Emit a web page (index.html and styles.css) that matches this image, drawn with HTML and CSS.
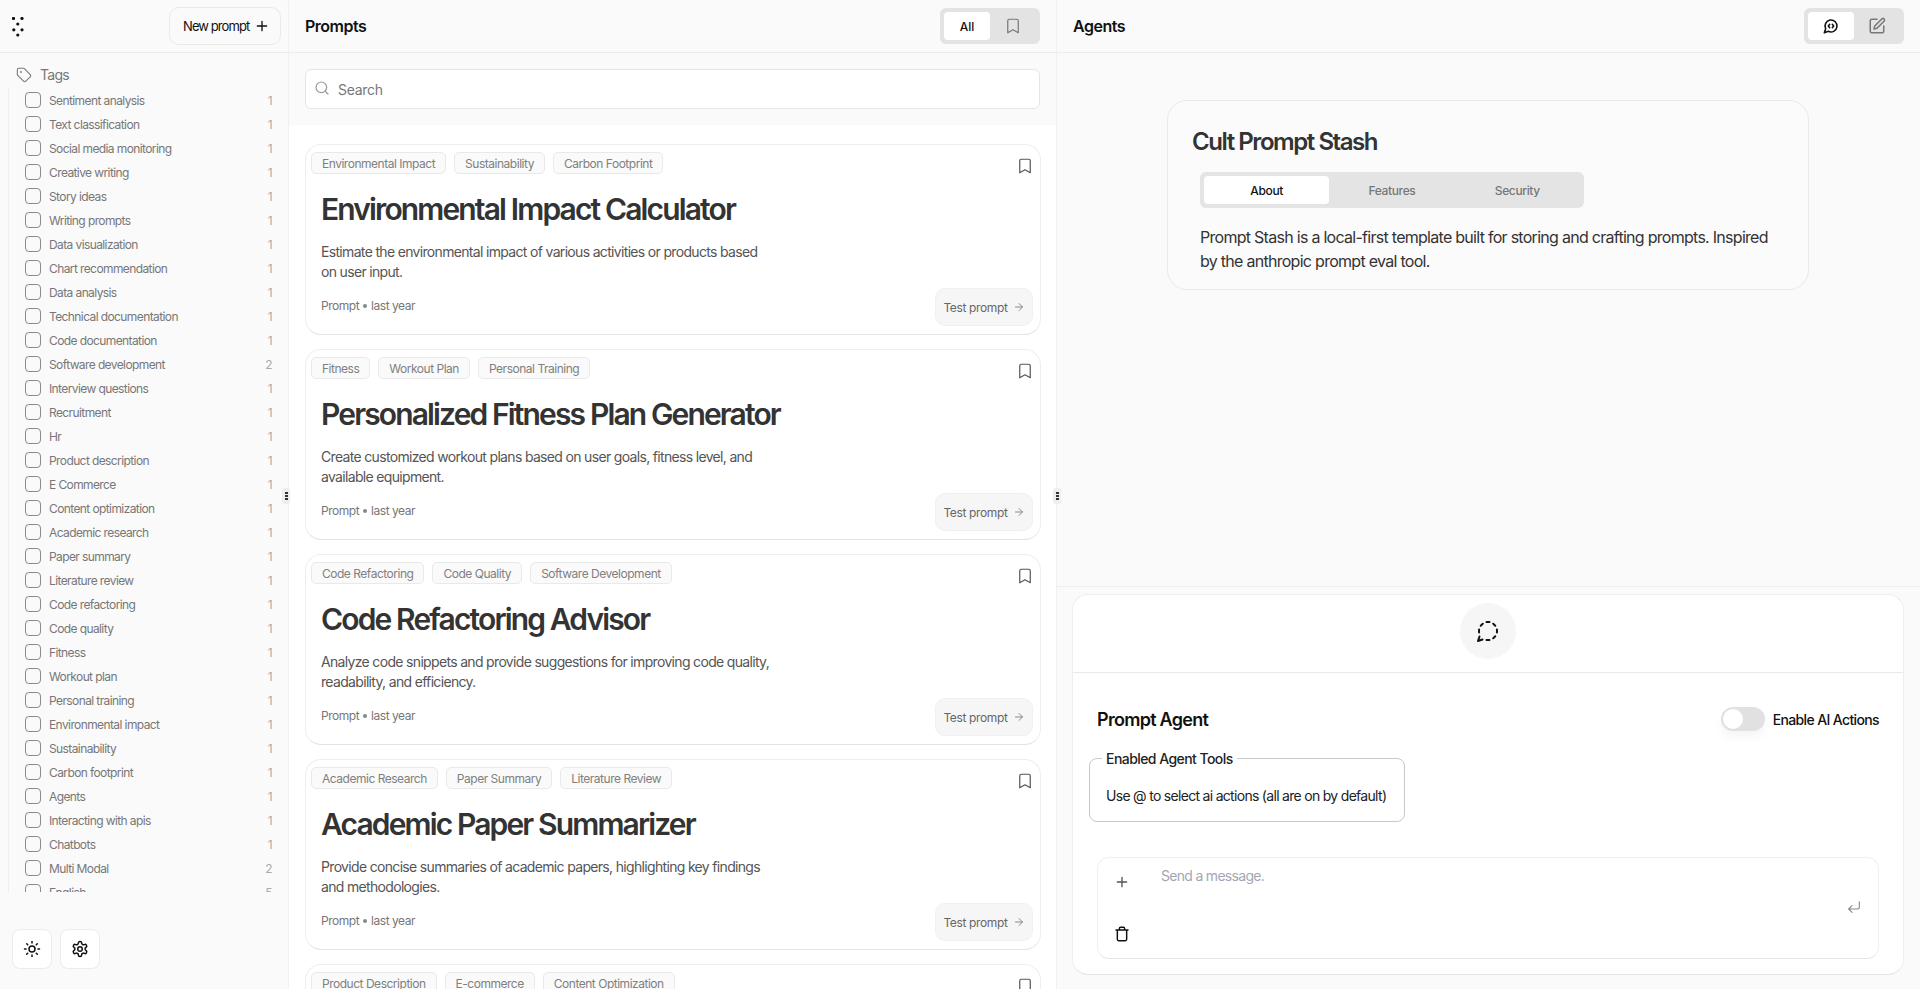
FILE: index.html
```html
<!DOCTYPE html>
<html lang="en">
<head>
<meta charset="utf-8">
<title>Cult Prompt Stash</title>
<link rel="stylesheet" href="styles.css">
</head>
<body>
<div class="app">
  <aside class="sidebar">
    <header class="side-head">
      <svg class="logo" viewBox="0 0 12 20" width="12" height="20" fill="#111"><circle cx="1.5" cy="1.5" r="1.6"/><circle cx="10" cy="1.5" r="1.6"/><circle cx="5.8" cy="7" r="1.6"/><circle cx="1.8" cy="12.8" r="1.6"/><circle cx="10" cy="12.8" r="1.6"/><circle cx="5.8" cy="18" r="1.6"/></svg>
      <button class="new-btn">New prompt <svg viewBox="0 0 24 24" width="16" height="16" fill="none" stroke="#111" stroke-width="2" stroke-linecap="round"><path d="M5 12h14M12 5v14"/></svg></button>
    </header>
    <div class="tags-title"><svg viewBox="0 0 24 24" width="16" height="16" fill="none" stroke="#777" stroke-width="1.6" stroke-linejoin="round" stroke-linecap="round"><path d="M12.6 2.6A2 2 0 0 0 11.2 2H4a2 2 0 0 0-2 2v7.2a2 2 0 0 0 .6 1.4l8.7 8.7a2.4 2.4 0 0 0 3.4 0l6.6-6.6a2.4 2.4 0 0 0 0-3.4z"/><circle cx="7.5" cy="7.5" r=".6"/></svg>Tags</div>
    <ul class="tag-list">
      <li><i></i><span>Sentiment analysis</span><b>1</b></li>
      <li><i></i><span>Text classification</span><b>1</b></li>
      <li><i></i><span>Social media monitoring</span><b>1</b></li>
      <li><i></i><span>Creative writing</span><b>1</b></li>
      <li><i></i><span>Story ideas</span><b>1</b></li>
      <li><i></i><span>Writing prompts</span><b>1</b></li>
      <li><i></i><span>Data visualization</span><b>1</b></li>
      <li><i></i><span>Chart recommendation</span><b>1</b></li>
      <li><i></i><span>Data analysis</span><b>1</b></li>
      <li><i></i><span>Technical documentation</span><b>1</b></li>
      <li><i></i><span>Code documentation</span><b>1</b></li>
      <li><i></i><span>Software development</span><b>2</b></li>
      <li><i></i><span>Interview questions</span><b>1</b></li>
      <li><i></i><span>Recruitment</span><b>1</b></li>
      <li><i></i><span>Hr</span><b>1</b></li>
      <li><i></i><span>Product description</span><b>1</b></li>
      <li><i></i><span>E Commerce</span><b>1</b></li>
      <li><i></i><span>Content optimization</span><b>1</b></li>
      <li><i></i><span>Academic research</span><b>1</b></li>
      <li><i></i><span>Paper summary</span><b>1</b></li>
      <li><i></i><span>Literature review</span><b>1</b></li>
      <li><i></i><span>Code refactoring</span><b>1</b></li>
      <li><i></i><span>Code quality</span><b>1</b></li>
      <li><i></i><span>Fitness</span><b>1</b></li>
      <li><i></i><span>Workout plan</span><b>1</b></li>
      <li><i></i><span>Personal training</span><b>1</b></li>
      <li><i></i><span>Environmental impact</span><b>1</b></li>
      <li><i></i><span>Sustainability</span><b>1</b></li>
      <li><i></i><span>Carbon footprint</span><b>1</b></li>
      <li><i></i><span>Agents</span><b>1</b></li>
      <li><i></i><span>Interacting with apis</span><b>1</b></li>
      <li><i></i><span>Chatbots</span><b>1</b></li>
      <li><i></i><span>Multi Modal</span><b>2</b></li>
      <li><i></i><span>English</span><b>5</b></li>
    </ul>
    <div class="side-foot">
      <button class="icon-btn"><svg viewBox="0 0 24 24" width="18" height="18" fill="none" stroke="#111" stroke-width="2" stroke-linecap="round"><circle cx="12" cy="12" r="4"/><path d="M12 2v2M12 20v2M4.9 4.9l1.4 1.4M17.7 17.7l1.4 1.4M2 12h2M20 12h2M6.3 17.7l-1.4 1.4M19.1 4.9l-1.4 1.4"/></svg></button>
      <button class="icon-btn"><svg viewBox="0 0 24 24" width="18" height="18" fill="none" stroke="#111" stroke-width="2" stroke-linecap="round" stroke-linejoin="round"><path d="M12.2 2h-.4a2 2 0 0 0-2 2v.2a2 2 0 0 1-1 1.7l-.4.3a2 2 0 0 1-2 0l-.2-.1a2 2 0 0 0-2.7.7l-.2.4a2 2 0 0 0 .7 2.7l.2.1a2 2 0 0 1 1 1.7v.5a2 2 0 0 1-1 1.7l-.2.1a2 2 0 0 0-.7 2.7l.2.4a2 2 0 0 0 2.7.7l.2-.1a2 2 0 0 1 2 0l.4.3a2 2 0 0 1 1 1.7v.2a2 2 0 0 0 2 2h.4a2 2 0 0 0 2-2v-.2a2 2 0 0 1 1-1.7l.4-.3a2 2 0 0 1 2 0l.2.1a2 2 0 0 0 2.7-.7l.2-.4a2 2 0 0 0-.7-2.7l-.2-.1a2 2 0 0 1-1-1.7v-.5a2 2 0 0 1 1-1.7l.2-.1a2 2 0 0 0 .7-2.7l-.2-.4a2 2 0 0 0-2.7-.7l-.2.1a2 2 0 0 1-2 0l-.4-.3a2 2 0 0 1-1-1.7V4a2 2 0 0 0-2-2z"/><circle cx="12" cy="12" r="3"/></svg></button>
    </div>
  </aside>

  <main class="prompts">
    <span class="grip"><i></i><i></i><i></i></span>
    <header class="panel-head">
      <h2>Prompts</h2>
      <div class="seg">
        <span class="seg-item on">All</span>
        <span class="seg-item"><svg viewBox="0 0 24 24" width="18" height="18" fill="none" stroke="#777" stroke-width="1.6" stroke-linejoin="round"><path d="M19 21l-7-4-7 4V5a2 2 0 0 1 2-2h10a2 2 0 0 1 2 2z"/></svg></span>
      </div>
    </header>
    <div class="search-wrap">
      <label class="search"><svg viewBox="0 0 24 24" width="16" height="16" fill="none" stroke="#999" stroke-width="1.8" stroke-linecap="round"><circle cx="11" cy="11" r="8"/><path d="M21 21l-4.3-4.3"/></svg><span>Search</span></label>
    </div>
    <div class="cards">
      <article class="card">
        <div class="chips"><span>Environmental Impact</span><span>Sustainability</span><span>Carbon Footprint</span></div>
        <svg class="mark" viewBox="0 0 24 24" width="18" height="18" fill="none" stroke="#555" stroke-width="1.6" stroke-linejoin="round"><path d="M19 21l-7-4-7 4V5a2 2 0 0 1 2-2h10a2 2 0 0 1 2 2z"/></svg>
        <h3>Environmental Impact Calculator</h3>
        <p>Estimate the environmental impact of various activities or products based on user input.</p>
        <div class="card-foot"><small>Prompt <em></em> last year</small><button class="test">Test prompt <svg viewBox="0 0 24 24" width="12" height="12" fill="none" stroke="#888" stroke-width="2" stroke-linecap="round" stroke-linejoin="round"><path d="M5 12h14M12 5l7 7-7 7"/></svg></button></div>
      </article>
      <article class="card">
        <div class="chips"><span>Fitness</span><span>Workout Plan</span><span>Personal Training</span></div>
        <svg class="mark" viewBox="0 0 24 24" width="18" height="18" fill="none" stroke="#555" stroke-width="1.6" stroke-linejoin="round"><path d="M19 21l-7-4-7 4V5a2 2 0 0 1 2-2h10a2 2 0 0 1 2 2z"/></svg>
        <h3>Personalized Fitness Plan Generator</h3>
        <p>Create customized workout plans based on user goals, fitness level, and available equipment.</p>
        <div class="card-foot"><small>Prompt <em></em> last year</small><button class="test">Test prompt <svg viewBox="0 0 24 24" width="12" height="12" fill="none" stroke="#888" stroke-width="2" stroke-linecap="round" stroke-linejoin="round"><path d="M5 12h14M12 5l7 7-7 7"/></svg></button></div>
      </article>
      <article class="card">
        <div class="chips"><span>Code Refactoring</span><span>Code Quality</span><span>Software Development</span></div>
        <svg class="mark" viewBox="0 0 24 24" width="18" height="18" fill="none" stroke="#555" stroke-width="1.6" stroke-linejoin="round"><path d="M19 21l-7-4-7 4V5a2 2 0 0 1 2-2h10a2 2 0 0 1 2 2z"/></svg>
        <h3>Code Refactoring Advisor</h3>
        <p>Analyze code snippets and provide suggestions for improving code quality, readability, and efficiency.</p>
        <div class="card-foot"><small>Prompt <em></em> last year</small><button class="test">Test prompt <svg viewBox="0 0 24 24" width="12" height="12" fill="none" stroke="#888" stroke-width="2" stroke-linecap="round" stroke-linejoin="round"><path d="M5 12h14M12 5l7 7-7 7"/></svg></button></div>
      </article>
      <article class="card">
        <div class="chips"><span>Academic Research</span><span>Paper Summary</span><span>Literature Review</span></div>
        <svg class="mark" viewBox="0 0 24 24" width="18" height="18" fill="none" stroke="#555" stroke-width="1.6" stroke-linejoin="round"><path d="M19 21l-7-4-7 4V5a2 2 0 0 1 2-2h10a2 2 0 0 1 2 2z"/></svg>
        <h3>Academic Paper Summarizer</h3>
        <p>Provide concise summaries of academic papers, highlighting key findings and methodologies.</p>
        <div class="card-foot"><small>Prompt <em></em> last year</small><button class="test">Test prompt <svg viewBox="0 0 24 24" width="12" height="12" fill="none" stroke="#888" stroke-width="2" stroke-linecap="round" stroke-linejoin="round"><path d="M5 12h14M12 5l7 7-7 7"/></svg></button></div>
      </article>
      <article class="card">
        <div class="chips"><span>Product Description</span><span>E-commerce</span><span>Content Optimization</span></div>
        <svg class="mark" viewBox="0 0 24 24" width="18" height="18" fill="none" stroke="#555" stroke-width="1.6" stroke-linejoin="round"><path d="M19 21l-7-4-7 4V5a2 2 0 0 1 2-2h10a2 2 0 0 1 2 2z"/></svg>
      </article>
    </div>
  </main>

  <section class="agents">
    <span class="grip"><i></i><i></i><i></i></span>
    <header class="panel-head">
      <h2>Agents</h2>
      <div class="seg">
        <span class="seg-item on"><svg viewBox="0 0 24 24" width="16" height="16" fill="none" stroke="#111" stroke-width="2.4" stroke-linecap="round" stroke-linejoin="round"><path d="M10 9.5 8 12l2 2.5"/><path d="m14 9.5 2 2.5-2 2.5"/><path d="M7.9 20A9 9 0 1 0 4 16.1L2 22z"/></svg></span>
        <span class="seg-item"><svg viewBox="0 0 24 24" width="18" height="18" fill="none" stroke="#777" stroke-width="2" stroke-linecap="round" stroke-linejoin="round"><path d="M12 3H5a2 2 0 0 0-2 2v14a2 2 0 0 0 2 2h14a2 2 0 0 0 2-2v-7"/><path d="M18.4 2.6a2.1 2.1 0 1 1 3 3L12 15l-4 1 1-4z"/></svg></span>
      </div>
    </header>
    <div class="about-area">
      <div class="about">
        <h1>Cult Prompt Stash</h1>
        <div class="tabs"><span class="on">About</span><span>Features</span><span>Security</span></div>
        <p>Prompt Stash is a local-first template built for storing and crafting prompts. Inspired by the anthropic prompt eval tool.</p>
      </div>
    </div>
    <div class="chat-area">
      <div class="chat">
        <div class="chat-top"><span class="bubble"><svg viewBox="0 0 24 24" width="24" height="24" fill="none" stroke="#111" stroke-width="2" stroke-linecap="round" stroke-linejoin="round"><path d="M13.5 3.1c-.5 0-1-.1-1.500-.1s-1 .1-1.500.1"/><path d="M19.300 6.800a10.450 10.450 0 0 0-2.100-2.100"/><path d="M20.900 13.500c.1-.5.1-1 .1-1.500s-.1-1-.1-1.500"/><path d="M17.200 19.300a10.450 10.450 0 0 0 2.100-2.100"/><path d="M10.500 20.900c.5.1 1 .1 1.500.1s1-.1 1.500-.1"/><path d="M3.500 17.500 2 22l4.500-1.500"/><path d="M3.100 10.500c0 .5-.1 1-.1 1.500s.1 1 .1 1.500"/><path d="M6.800 4.700a10.450 10.450 0 0 0-2.100 2.100"/></svg></span></div>
        <div class="chat-body">
          <div class="agent-row">
            <h4>Prompt Agent</h4>
            <div class="toggle-wrap"><span class="toggle"><i></i></span>Enable AI Actions</div>
          </div>
          <fieldset class="tools">
            <legend>Enabled Agent Tools</legend>
            <p>Use @ to select ai actions (all are on by default)</p>
          </fieldset>
          <div class="composer">
            <div class="composer-tools">
              <svg viewBox="0 0 24 24" width="16" height="16" fill="none" stroke="#555" stroke-width="2" stroke-linecap="round"><path d="M5 12h14M12 5v14"/></svg>
              <svg viewBox="0 0 24 24" width="16" height="16" fill="none" stroke="#111" stroke-width="2.200" stroke-linecap="round" stroke-linejoin="round"><path d="M3 6h18M19 6v14a2 2 0 0 1-2 2H7a2 2 0 0 1-2-2V6M8 6V4a2 2 0 0 1 2-2h4a2 2 0 0 1 2 2v2"/></svg>
            </div>
            <div class="placeholder">Send a message.</div>
            <svg class="enter" viewBox="0 0 24 24" width="16" height="16" fill="none" stroke="#888" stroke-width="1.6" stroke-linecap="round" stroke-linejoin="round"><path d="M20 4v8a3 3 0 0 1-3 3H4M9 10l-5 5 5 5"/></svg>
          </div>
        </div>
      </div>
    </div>
  </section>
</div>
</body>
</html>
```
FILE: styles.css
```css
* { box-sizing: border-box; }
html, body { margin: 0; height: 100%; overflow: hidden; }
body { font-family: Inter, "Noto Sans", sans-serif; color: #111; background: #fafafa; }
button { font-family: inherit; cursor: pointer; }
h1, h2, h3, h4, p, ul { margin: 0; padding: 0; }
ul { list-style: none; }

.app { display: grid; grid-template-columns: 289px 768px 1fr; height: 989px; }

/* sidebar */
.sidebar { display: flex; flex-direction: column; background: #fafafa; border-right: 1px solid #f0f0f0; height: 989px; }
.side-head { height: 53px; flex: none; display: flex; align-items: center; justify-content: space-between; padding: 0 7px 0 12px; border-bottom: 1px solid #ececec; }
.logo { display: block; margin-top: 1px; }
.new-btn { display: flex; align-items: center; gap: 5px; height: 38px; width: 112px; justify-content: flex-start; font-size: 13px; letter-spacing: -.07em; color: #111; background: #fafafa; border: 1px solid #e9e9e9; border-radius: 10px; padding: 0 0 0 13px; }
.tags-title { display: flex; align-items: center; gap: 8px; height: 35px; padding: 8px 0 0 16px; font-size: 14px; letter-spacing: -.05em; color: #777; flex: none; }
.tag-list { flex: none; height: 804px; overflow: hidden; margin-left: 8px; border-left: 1px solid #eee; padding-left: 16px; padding-right: 16px; }
.tag-list li { display: flex; align-items: center; height: 24px; font-size: 12px; letter-spacing: -.05em; color: #777; }
.tag-list i { width: 16px; height: 16px; border: 1px solid #8a8a8a; border-radius: 4px; margin-right: 8px; flex: none; }
.tag-list span { flex: 1; }
.tag-list b { font-weight: 400; color: #aaa; }
.side-foot { display: flex; gap: 8px; padding: 37px 0 0 12px; }
.icon-btn { width: 40px; height: 40px; display: flex; align-items: center; justify-content: center; padding: 0; background: #fff; border: 1px solid #ececec; border-radius: 8px; }

/* panel heads */
.panel-head { height: 53px; display: flex; align-items: center; justify-content: space-between; padding: 0 16px; border-bottom: 1px solid #ececec; background: #fafafa; flex: none; }
.panel-head h2 { font-size: 16px; font-weight: 600; letter-spacing: -.03em; }
.seg { display: flex; padding: 4px; width: 100px; height: 36px; background: #e3e3e3; border-radius: 6px; }
.seg-item { flex: 1; display: flex; align-items: center; justify-content: center; border-radius: 4px; font-size: 12px; font-weight: 500; }
.seg-item.on { background: #fff; }

/* prompts */
.prompts { position: relative; background: #fff; border-right: 1px solid #f0f0f0; height: 989px; display: flex; flex-direction: column; }
.search-wrap { height: 72px; flex: none; padding: 16px 16px 0; background: #fafafa; }
.search { display: flex; align-items: flex-start; gap: 8px; height: 40px; padding: 10px 8px 0; background: #fff; border: 1px solid #e5e5e5; border-radius: 6px; font-size: 14px; letter-spacing: -.02em; color: #777; }
.search span { margin-top: 1px; }
.cards { flex: 1; min-height: 0; overflow: hidden; padding: 19px 15px 0 16px; display: flex; flex-direction: column; gap: 14px; }
.card { position: relative; height: 191px; flex: none; padding: 7px 7px 7px 5px; border: 1px solid #eee; border-bottom-color: #e4e4e4; border-radius: 16px; background: #fff; }
.chips { display: flex; gap: 8px; height: 22px; }
.chips span { display: flex; align-items: center; padding: 0 10px; border: 1px solid #e9e9e9; border-radius: 5px; background: #fafafa; font-size: 12px; letter-spacing: -.04em; color: #808080; }
.mark { position: absolute; top: 12px; right: 6px; }
.card h3 { margin: 17px 0 0 10px; font-size: 30px; line-height: 36px; font-weight: 600; letter-spacing: -.062em; color: #333; }
.card p { margin: 15px 0 0 10px; width: 450px; font-size: 14px; line-height: 20px; letter-spacing: -.048em; color: #555; }
.card-foot { position: absolute; left: 15px; right: 7px; bottom: 8px; display: flex; justify-content: space-between; align-items: flex-start; }
.card-foot small { display: flex; align-items: center; gap: 4px; margin-top: 10px; font-size: 12px; letter-spacing: -.04em; color: #777; }
.card-foot em { width: 4px; height: 4px; border-radius: 50%; background: #888; }
.test { display: flex; align-items: center; justify-content: center; gap: 5px; width: 98px; height: 38px; padding: 0; background: #f6f6f6; border: 1px solid #f0f0f0; border-radius: 10px; font-size: 12px; letter-spacing: -.03em; color: #666; }
.grip { position: absolute; z-index: 2; top: 488px; display: flex; flex-direction: column; align-items: center; justify-content: center; gap: 1px; width: 8px; height: 16px; background: #eee; border-radius: 3px; }
.grip i { width: 3px; height: 2px; background: #333; }
.prompts > .grip { left: -7px; }

/* agents */
.agents { position: relative; display: flex; flex-direction: column; height: 989px; background: #fafafa; }
.agents > .grip { left: -4px; }
.about-area { height: 534px; flex: none; padding: 47px 96px 0 110px; border-bottom: 1px solid #eee; }
.about { width: 642px; height: 190px; padding: 25px 24px; border: 1px solid #e9e9e9; border-radius: 20px; background: #fbfbfb; }
.about h1 { font-size: 24px; line-height: 32px; font-weight: 600; letter-spacing: -.06em; color: #333; }
.tabs { display: flex; width: 384px; height: 36px; margin: 14px 0 0 8px; padding: 4px; background: #e4e4e4; border-radius: 6px; }
.tabs span { flex: 1; display: flex; align-items: center; justify-content: center; border-radius: 4px; font-size: 12px; font-weight: 500; letter-spacing: -.03em; color: #777; }
.tabs span.on { color: #111; background: #fff; }
.about p { width: 575px; margin: 17px 0 0 8px; font-size: 16px; line-height: 24px; letter-spacing: -.045em; color: #333; }
.chat-area { flex: 1; padding: 7px 16px 7px 15px; background: #fafafa; }
.chat { height: 381px; background: #fff; border: 1px solid #eee; border-bottom-color: #e4e4e4; border-radius: 16px; }
.chat-top { display: flex; justify-content: center; align-items: flex-start; padding-top: 8px; height: 78px; border-bottom: 1px solid #e9e9e9; }
.bubble { display: flex; align-items: center; justify-content: center; width: 56px; height: 56px; border-radius: 50%; background: #f6f6f6; }
.chat-body { padding: 31px 24px 0; }
.agent-row { display: flex; justify-content: space-between; align-items: center; height: 30px; }
.agent-row h4 { font-size: 18px; font-weight: 600; letter-spacing: -.04em; }
.toggle-wrap { display: flex; align-items: center; gap: 8px; font-size: 14px; font-weight: 500; letter-spacing: -.045em; }
.toggle { display: block; width: 44px; height: 24px; padding: 2px; border-radius: 12px; background: #e1e1e1; box-shadow: 0 6px 10px rgba(0,0,0,.04); }
.toggle i { display: block; width: 20px; height: 20px; border-radius: 50%; background: #fff; }
.tools { width: 316px; height: 72px; margin: 16px 0 0 -8px; padding: 0 16px; border: 1px solid #c8c8c8; border-radius: 8px; }
.tools legend { padding: 0 4px; margin-left: -4px; font-size: 14px; font-weight: 500; letter-spacing: -.04em; color: #222; }
.tools p { margin-top: 20px; font-size: 14px; letter-spacing: -.05em; color: #222; white-space: nowrap; }
.composer { position: relative; display: flex; height: 102px; margin-top: 35px; border: 1px solid #f0f0f0; border-bottom-color: #e6e6e6; border-radius: 12px; }
.composer-tools { display: flex; flex-direction: column; justify-content: space-between; align-items: center; width: 48px; padding: 16px 0; flex: none; }
.placeholder { margin: 9px 0 0 15px; font-size: 14px; letter-spacing: -.05em; color: #a3a7b3; }
.enter { position: absolute; right: 16px; top: 41px; }
```
